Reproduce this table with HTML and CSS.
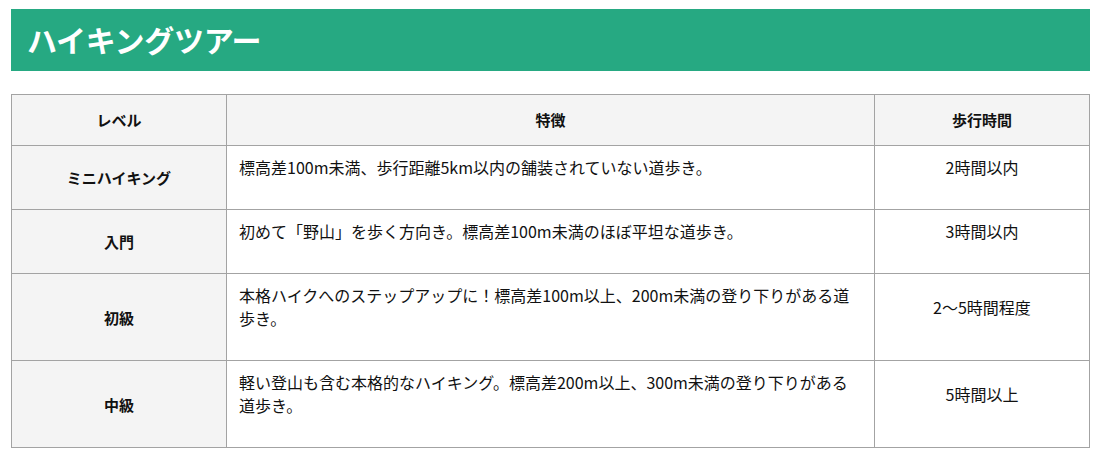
FILE: index.html
```html
<!DOCTYPE html>
<html lang="ja">
<head>
<meta charset="utf-8">
<title>ハイキングツアー</title>
<link rel="stylesheet" href="styles.css">
</head>
<body>
<div class="page">
  <h1 class="title">ハイキングツアー</h1>
  <table class="tour">
    <colgroup>
      <col class="c-level">
      <col class="c-desc">
      <col class="c-time">
    </colgroup>
    <thead>
      <tr>
        <th>レベル</th>
        <th>特徴</th>
        <th>歩行時間</th>
      </tr>
    </thead>
    <tbody>
      <tr>
        <th class="level">ミニハイキング</th>
        <td class="desc"><p>標高差100m未満、歩行距離5km以内の舗装されていない道歩き。</p></td>
        <td class="time"><p>2時間以内</p></td>
      </tr>
      <tr>
        <th class="level">入門</th>
        <td class="desc"><p>初めて「野山」を歩く方向き。標高差100m未満のほぼ平坦な道歩き。</p></td>
        <td class="time"><p>3時間以内</p></td>
      </tr>
      <tr>
        <th class="level">初級</th>
        <td class="desc"><p>本格ハイクへのステップアップに！標高差100m以上、200m未満の登り下りがある道歩き。</p></td>
        <td class="time"><p>2〜5時間程度</p></td>
      </tr>
      <tr>
        <th class="level">中級</th>
        <td class="desc"><p>軽い登山も含む本格的なハイキング。標高差200m以上、300m未満の登り下りがある道歩き。</p></td>
        <td class="time"><p>5時間以上</p></td>
      </tr>
    </tbody>
  </table>
</div>
</body>
</html>
```
FILE: styles.css
```css
html, body {
  margin: 0;
  padding: 0;
  background: #ffffff;
}

body {
  font-family: "Noto Sans CJK JP", "Noto Sans", sans-serif;
  color: #111111;
}

.page {
  padding: 9px 13px 0 11px;
}

.title {
  margin: 0;
  height: 62px;
  line-height: 60px;
  padding-left: 16px;
  background: #26a982;
  color: #ffffff;
  font-size: 30px;
  font-weight: 700;
  letter-spacing: -0.3px;
}

.tour {
  margin-top: 23px;
  width: 100%;
  border-collapse: collapse;
  table-layout: fixed;
  font-size: 16px;
}

.c-level { width: 215px; }
.c-time { width: 215px; }

.tour th,
.tour td {
  border: 1px solid #a3a3a3;
  vertical-align: middle;
}

.tour thead th {
  background: #f4f4f4;
  font-size: 15px;
  font-weight: 700;
  line-height: 23px;
  padding: 13px 10px 14px;
  text-align: center;
}

.tour .level {
  background: #f4f4f4;
  font-size: 15px;
  font-weight: 700;
  text-align: center;
  padding: 10px;
}

.tour .desc {
  padding: 10px 20px 10px 12px;
  text-align: left;
}

.tour .time {
  padding: 10px;
  text-align: center;
}

.tour p {
  margin: 0 0 20px;
  line-height: 23px;
}
```
